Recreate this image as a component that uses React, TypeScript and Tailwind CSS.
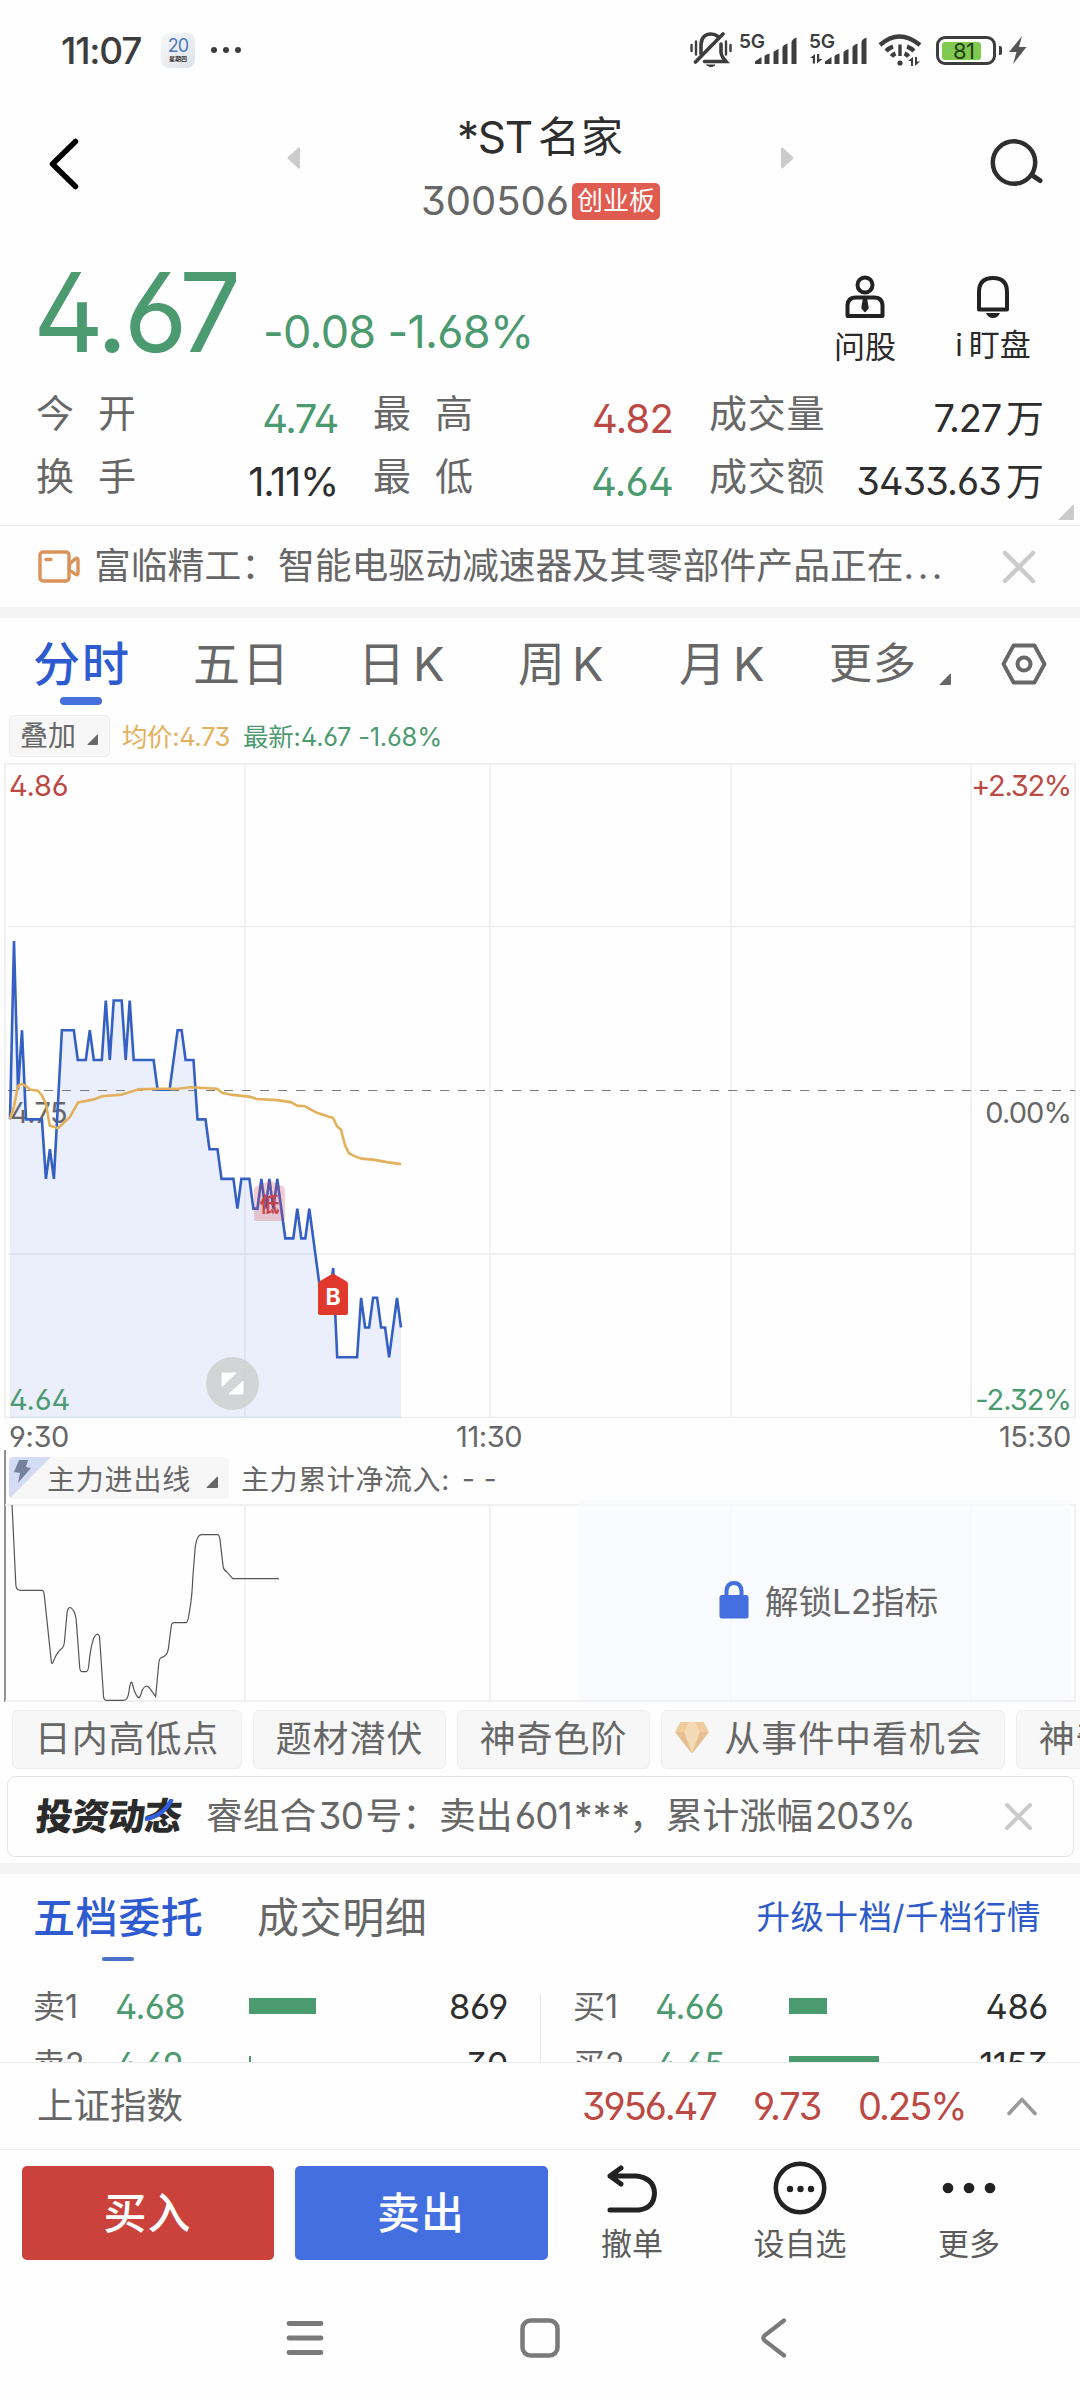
import React from 'react';

// [minute, ticks away from the previous close]
const priceTicks: [number, number][] = [
  [0, -1], [1, 5], [2, 0], [3, 2], [4, -1], [8, -1], [9, -3], [10, -2], [11, -3], [13, 2], [16, 2], [17, 1],
  [19, 1], [20, 2], [21, 1], [23, 1], [24, 3], [25, 1], [26, 3], [28, 3], [29, 1], [30, 3], [31, 1], [36, 1],
  [37, 0], [40, 0], [42, 2], [43, 2], [44, 1], [46, 1], [47, -1], [49, -1], [50, -2], [52, -2], [53, -3],
  [56, -3], [57, -4], [58, -3], [60, -3], [61, -4], [62, -4], [63, -3], [64, -4], [65, -3], [66, -4], [67, -3],
  [69, -5], [71, -5], [72, -4], [73, -5], [74, -5], [75, -4], [78, -7], [80, -7], [81, -6], [82, -9], [87, -9],
  [88, -7], [89, -8], [90, -8], [91, -7], [92, -7], [93, -8], [94, -8], [95, -9], [97, -7], [98, -8],
];

const avgLine =
  '10,356 14,343.6 18,323 22,320.9 26.5,323.6 30.5,326.7 38,327.8 42,332.6 46,340.9 49.7,362.5 58,365.3 70,353.9 78,339.5 94,336.4 102,333.3 122,331.6 138,326.4 158,325.7 178,325.7 191,324.3 217,325.7 222,329.8 230,331.6 249,333.6 257,336 277,337.1 291,339.1 297,342.6 305,343.3 317,349.8 333,355 337,363.2 341,366.7 345,382.2 349,390.4 354,392.9 361,395.6 373,396.6 387,399.1 401,401.1';

const flowLine =
  'M35 0 L46 240 Q47 256 60 256 L122 256 Q128 256 129 275 L149 470 Q151 482 156 467 Q165 442 180 430 Q187 425 188 400 L195 320 Q200 302 208 310 Q221 322 222 355 L231 480 Q231 500 238 500 L250 500 Q256 500 258 480 Q262 430 272 400 Q283 378 289 395 L300 565 Q300 586 308 586 L360 586 Q372 586 375 555 Q381 517 385 540 Q395 578 404 578 Q408 575 413 555 Q424 535 435 550 L452 575 L461 475 Q463 457 470 457 Q486 453 489 430 L497 365 Q498 353 505 353 L540 353 Q546 353 550 320 Q558 275 560 215 L567 125 Q572 89 585 89 L632 89 Q638 89 640 115 L648 185 Q650 197 658 200 L676 221 L810 221';

const gridX = [245, 490, 731, 971];

const stats = [
  { label: '今', label2: '开', value: '4.74', color: 'text-[#4c9a70] tracking-[-1.4px]' },
  { label: '最', label2: '高', value: '4.82', color: 'text-[#bb4a44] tracking-[-0.8px]' },
  { label: '换', label2: '手', value: '1.11%', color: 'text-[#2e2e2e] tracking-[-1.3px]' },
  { label: '最', label2: '低', value: '4.64', color: 'text-[#4c9a70] tracking-[-0.8px]' },
];

const orders = [
  [
    { name: '卖1', price: '4.68', bar: 67, qty: '869' },
    { name: '卖2', price: '4.69', bar: 2, qty: '30' },
  ],
  [
    { name: '买1', price: '4.66', bar: 38, qty: '486' },
    { name: '买2', price: '4.65', bar: 90, qty: '1153' },
  ],
];

function Corner({ size, className }: { size: number; className: string }) {
  return (
    <svg width={size} height={size} viewBox="0 0 12 12" fill="currentColor" className={className}>
      <path d="M12 1.5 V11 Q12 12 11 12 H1 Q0 12 .7 11.2 L10.8 1 Q12 0 12 1.5Z" />
    </svg>
  );
}

function Close({ size, width }: { size: number; width: number }) {
  return (
    <svg width={size} height={size} viewBox={`0 0 ${size} ${size}`} stroke="#cbcbcb" strokeWidth={width} strokeLinecap="round">
      <path d={`M3 3 L${size - 3} ${size - 3} M${size - 3} 3 L3 ${size - 3}`} />
    </svg>
  );
}

function Signal({ data }: { data?: boolean }) {
  return (
    <svg width="60" height="34" viewBox="0 0 60 34" fill="#3d3d3d" className="overflow-visible">
      <text x="-1" y="15" fontSize="19" fontWeight="600" letterSpacing="-0.2">5G</text>
      <path d="M15 31 V28.5 L21.5 24 V31Z M24.500 31 V23.500 Q24.500 22 29.500 20.500 V31Z M33.500 31 V19.500 Q33.500 18 38.500 16 V31Z M42.500 31 V14.500 Q42.500 12.500 47.500 10.500 V31Z M51.500 31 V9.500 Q51.500 6.500 56.500 4.500 V31Z" />
      {data && <path d="M0 25 L5 21 V30.500 H2.800 V25Z M7 21 H9.200 V26 H12.500 L7 30.500Z" />}
    </svg>
  );
}

function StatusBar() {
  return (
    <div className="h-[100px] flex items-center pl-[61px] text-[#3d3d3d]">
      <div className="w-[100px] text-[37px] leading-none font-medium tracking-[-1.2px]">11:07</div>
      <div className="w-[34px] h-[35px] mt-[1px] rounded-[8px] bg-linear-to-br from-[#f6f8fa] to-[#dde3e9] flex flex-col items-center">
        <span className="text-[18px] leading-none tracking-[-1px] text-[#4f79bd] mt-[4px]">20</span>
        <span className="text-[6px] leading-[8px] font-bold text-[#333]">星期四</span>
      </div>
      <div className="flex gap-[6px] ml-[16px]">
        <i className="size-[6px] rounded-full bg-[#3d3d3d]" />
        <i className="size-[6px] rounded-full bg-[#3d3d3d]" />
        <i className="size-[6px] rounded-full bg-[#3d3d3d]" />
      </div>
      <svg width="42" height="36" viewBox="0 0 42 36" className="ml-[449px]" fill="none" stroke="#3d3d3d" strokeWidth="3.600" strokeLinecap="round">
        <path d="M1.500 13 V19 M6 9.500 V22.500 M36 9.500 V22.500 M40.500 13 V19" strokeWidth="2.400" />
        <path d="M11 22 V12 Q12 2 21 2 Q25 2 28 4.500 M31 12 V20 Q31 24 36 29.500 H14.500 M5.500 30 L33 2" />
        <path d="M17 33 H25 Q21 36.500 17 33Z" fill="#3d3d3d" strokeWidth="1" />
      </svg>
      <div className="flex items-center ml-[8px] gap-[10px]">
        <Signal />
        <Signal data />
      </div>
      <svg width="44" height="34" viewBox="0 0 44 34" className="ml-[8px]" fill="none" stroke="#3d3d3d" strokeWidth="4.400">
        <path d="M2 12 Q21 -5 42 12" />
        <path d="M8 18 Q11 15 15 13.500 M29 13.500 Q33 15 36 18 M13.500 23.500 Q15 21.500 17.500 20.500 M26.500 20.500 Q29 21.500 30.500 23.500" />
        <path d="M22 11.500 V23" strokeWidth="3.400" />
        <circle cx="22" cy="30" r="2.600" fill="#3d3d3d" stroke="none" />
        <path d="M30 28 L35 24 V33 H33 V28Z M37 24 H39 V28.500 H42 L37 33Z" fill="#3d3d3d" stroke="none" />
      </svg>
      <div className="ml-[14px] w-[60px] h-[29px] rounded-[9px] border-[3px] border-[#3d3d3d] p-[3px]">
        <div className="w-[39px] h-[18px] rounded-[3px] bg-[#80c950] text-[22px] leading-[19px] pl-[11px] tracking-[-0.500px] text-[#24401a]">81</div>
      </div>
      <div className="w-[3px] h-[9px] ml-[3px] rounded-r-[2px] bg-[#3d3d3d]" />
      <svg width="18" height="28" viewBox="0 0 18 28" fill="#555" className="ml-[7px]">
        <path d="M13 0 L0 16 H7.500 L4 28 L17.500 11 H10Z" />
      </svg>
    </div>
  );
}

function Header() {
  return (
    <div className="h-[130px] flex text-[#2e2e2e]">
      <svg width="32" height="54" viewBox="0 0 32 54" className="ml-[48px] mt-[37px]" fill="none" stroke="#000" strokeWidth="5.500" strokeLinecap="round" strokeLinejoin="round">
        <path d="M27.500 4.500 L4.500 27 L27.500 49.500" />
      </svg>
      <svg width="14" height="22" viewBox="0 0 14 22" fill="#cbcbcb" className="ml-[207px] mt-[47px]">
        <path d="M1 10 Q0 11 1 12 L11.500 21.500 Q13 22 13 20.500 V1.500 Q13 0 11.500 .5Z" />
      </svg>
      <div className="w-[479px] flex flex-col items-center">
        <div className="mt-[14px] h-[46px] text-[44px] leading-[46px] flex items-center gap-[6px]">
          <span className="tracking-[-1.300px]">*ST</span>
          <span className="text-[42px] tracking-[1px]">名家</span>
        </div>
        <div className="mt-[18px] h-[46px] flex items-center gap-[3px] text-[40px] leading-none text-[#676767]">
          <span>300506</span>
          <span className="h-[37px] w-[88px] rounded-[5px] bg-[#e15c50] text-white text-[26px] leading-[35px] text-center">创业板</span>
        </div>
      </div>
      <svg width="14" height="22" viewBox="0 0 14 22" fill="#cbcbcb" className="mt-[47px]">
        <path d="M13 10 Q14 11 13 12 L2.500 21.500 Q1 22 1 20.500 V1.500 Q1 0 2.500 .5Z" />
      </svg>
      <svg width="56" height="52" viewBox="0 0 56 52" className="ml-[194px] mt-[37px]" fill="none" stroke="#2e2e2e" strokeWidth="4.500" strokeLinecap="round">
        <circle cx="26" cy="25.500" r="21.200" />
        <path d="M44.500 38.500 L52 43.500" strokeWidth="5" />
      </svg>
    </div>
  );
}

function Quote() {
  return (
    <div className="h-[152px] flex text-[#4c9a70]">
      <div className="w-[226px] pl-[33px] mt-[27px] text-[110px] leading-[110px] tracking-[-4.200px]">4.67</div>
      <div className="w-[568px] pl-[37px] mt-[79px] text-[45px] leading-[46px] tracking-[-0.700px] whitespace-pre">-0.08 -1.68%</div>
      <div className="flex text-[#2a2a2a] text-[31px] leading-[34px] pt-[44px]">
        <div className="w-[142px] flex flex-col items-center">
          <svg width="42" height="46" viewBox="0 0 42 46" fill="none" stroke="#222" strokeWidth="4" strokeLinejoin="round">
            <circle cx="21" cy="11" r="7.500" />
            <path d="M3.500 42 V31 Q4 23.500 12 23.500 H30 Q38 23.500 38.500 31 V42Z" />
            <path d="M19.500 25 H22.500 L24 34 L21 37.500 L18 34Z" fill="#222" strokeWidth="1.500" />
          </svg>
          <div className="mt-[10px]">问股</div>
        </div>
        <div className="w-[114px] flex flex-col items-center">
          <svg width="36" height="46" viewBox="0 0 36 46" fill="none" stroke="#222" strokeWidth="4" strokeLinejoin="round">
            <path d="M4 35.500 V18 Q4 4 18 4 Q32 4 32 18 V35.500Z" />
            <path d="M11 39 H25 Q23 44 18 44 Q13 44 11 39Z" fill="#222" stroke="none" />
          </svg>
          <div className="mt-[8px] whitespace-nowrap"><span className="mr-[6px]">i</span>盯盘</div>
        </div>
      </div>
    </div>
  );
}

function Stats() {
  return (
    <div className="h-[144px] border-b border-[#ededed] relative flex text-[38px] leading-[63px] text-[#676767]">
      <div className="grid grid-cols-[338px_335px] auto-rows-[63px]">
        {stats.map((s, i) => (
          <div key={i} className="flex">
            <span className={i % 2 ? 'pl-[35px] w-[97px]' : 'pl-[36px] w-[98px]'}>{s.label}</span>
            <span>{s.label2}</span>
            <span className={`ml-auto mt-[5px] text-[40px] ${s.color}`}>{s.value}</span>
          </div>
        ))}
      </div>
      <div className="w-[371px] grid auto-rows-[63px] pl-[36px]">
        <div className="flex justify-between">
          <span className="tracking-[0.7px]">成交量</span>
          <span className="mt-[5px] text-[#2e2e2e]"><span className="tracking-[-1.2px] mr-[5px]">7.27</span>万</span>
        </div>
        <div className="flex justify-between">
          <span className="tracking-[0.7px]">成交额</span>
          <span className="mt-[5px] text-[#2e2e2e]"><span className="tracking-[-0.9px] mr-[5px]">3433.63</span>万</span>
        </div>
      </div>
      <Corner size={16} className="absolute right-[6px] bottom-[5px] text-[#cbcbcb]" />
    </div>
  );
}

function NewsStrip() {
  return (
    <div className="h-[81px] flex items-center pl-[37px]">
      <svg width="44" height="36" viewBox="0 0 44 36" fill="none" stroke="#d9925a" strokeWidth="3.400" strokeLinejoin="round">
        <rect x="3" y="3" width="29" height="29" rx="3" />
        <path d="M32.500 15 L38 10 Q41 8 41 11 V24 Q41 27 38 25 L32.500 21Z M9 10.500 H14" strokeLinecap="round" />
      </svg>
      <div className="ml-[13px] w-[908px] text-[36.8px] leading-none text-[#676767] whitespace-nowrap">
        富临精工：智能电驱动减速器及其零部件产品正在<span className="tracking-[3.500px]">...</span>
      </div>
      <Close size={34} width={4.5} />
    </div>
  );
}

function PeriodTabs() {
  return (
    <div className="h-[90px] flex items-center text-[47px] leading-none text-[#676767] whitespace-nowrap">
      <div className="relative w-[161px] pl-[33px] tracking-[2px] font-medium text-[#2f5bd0]">
        分时
        <span className="absolute left-[60px] -bottom-[18px] w-[42px] h-[8px] rounded-full bg-[#446fdc]" />
      </div>
      <div className="w-[165px] pl-[32px] tracking-[2px]">五日</div>
      <div className="w-[160px] pl-[32px]">日<span className="ml-[8px]">K</span></div>
      <div className="w-[161px] pl-[32px]">周<span className="ml-[7px]">K</span></div>
      <div className="w-[160px] pl-[32px]">月<span className="ml-[7px]">K</span></div>
      <div className="w-[194px] pl-[22px] flex items-end text-[43px] tracking-[1px]">
        更多
        <Corner size={12} className="ml-[22px]" />
      </div>
      <svg width="46" height="42" viewBox="0 0 46 42" fill="none" stroke="#676767" strokeWidth="3.800" strokeLinejoin="round" className="mt-[2px]">
        <path d="M12.500 2.500 H33.500 L43.500 21 L33.500 39.500 H12.500 L2.500 21Z" />
        <circle cx="23" cy="21" r="6.500" strokeWidth="4" />
      </svg>
    </div>
  );
}

function PriceChart() {
  const pts = priceTicks.map(([m, t]) => `${(10 + m * 3.99).toFixed(1)},${(326.7 - t * 29.73).toFixed(1)}`).join(' ');
  return (
    <div className="relative h-[655px] text-[29px] leading-[30px] text-[#676767] tracking-[-0.6px]">
      <svg width="1080" height="655" viewBox="0 0 1080 655" fill="none">
        <path d="M5 0.700 H1075 V654.500 H5Z M8 163.500 H1075 M8 491 H1075" stroke="#ececec" strokeWidth="1.500" />
        {gridX.map(x => <path key={x} d={`M${x} 0 V655`} stroke="#ececec" strokeWidth="1.500" />)}
        <polygon points={`10,655 ${pts} 401,655`} fill="#446fe0" fillOpacity="0.1" />
        <path d="M8 327.500 H1075" stroke="#7c7c7c" strokeWidth="1" strokeDasharray="9 9" />
      </svg>
      <span className="absolute left-[10px] top-[335px]">4.75</span>
      <svg width="1080" height="655" viewBox="0 0 1080 655" fill="none" className="absolute inset-0">
        <polyline points={pts} stroke="#3460c4" strokeWidth="2.600" />
        <polyline points={avgLine} stroke="#e3b05c" strokeWidth="2.600" strokeLinejoin="round" />
        <path d="M254 427 Q254 424 257 423 L269.500 417.500 L282 423 Q285 424 285 427 V456 Q285 458 283 458 H256 Q254 458 254 456Z" fill="#d04050" fillOpacity="0.250" />
        <text x="269.500" y="448.500" textAnchor="middle" fontSize="20" fontWeight="700" letterSpacing="0" fill="#c94246">低</text>
        <path d="M318 521 Q318 519 320 518 L333 510.500 L346 518 Q348 519 348 521 V550 Q348 552 346 552 H320 Q318 552 318 550Z" fill="#e1382d" />
        <text x="333" y="542" textAnchor="middle" fontSize="23" fontWeight="700" letterSpacing="0" fill="#fff">B</text>
        <circle cx="232.500" cy="620.500" r="26.500" fill="#cfcfcf" fillOpacity="0.850" />
        <path d="M222 610 H236 L222 623.500Z M243 618 V631 H229Z" fill="#fff" stroke="#fff" strokeLinejoin="round" />
      </svg>
      <span className="absolute left-[9px] top-[8px] tracking-[-0.200px] text-[#bb4a44]">4.86</span>
      <span className="absolute right-[9px] top-[8px] text-[#bb4a44] tracking-[-1.300px]">+2.32%</span>
      <span className="absolute right-[9px] top-[335px] tracking-[-0.900px]">0.00%</span>
      <span className="absolute left-[9px] top-[622px] tracking-[-0.200px] text-[#4c9a70]">4.64</span>
      <span className="absolute right-[9px] top-[622px] text-[#4c9a70] tracking-[-1px]">-2.32%</span>
    </div>
  );
}

function FlowChart() {
  return (
    <div className="relative">
      <div className="absolute left-[4px] -top-[5px] w-[2px] h-[252px] bg-[#929292]" />
      <div className="h-[49px] flex items-center pl-[9px] text-[28px] leading-none text-[#676767]">
        <div className="relative -mt-[3px] w-[220px] h-[42px] rounded-[5px] bg-[#f7f7f7] flex items-center pl-[38px] pt-[3px] overflow-hidden tracking-[0.8px]">
          <svg width="42" height="42" viewBox="0 0 42 42" className="absolute left-0 top-0">
            <path d="M0 0 H42 L0 42Z" fill="#d3dcf4" />
            <path d="M10 3 L19 3 L17 10 L22 11 L9 26 L11 16 L5 15Z" fill="#76819f" />
          </svg>
          主力进出线
          <Corner size={12} className="ml-[15px] mt-[5px]" />
        </div>
        <span className="ml-[12px] tracking-[0.6px]">主力累计净流入:</span>
        <span className="ml-[12px] -mt-px tracking-[0.600px]">- -</span>
      </div>
      <div className="relative h-[198px]">
        <svg width="1080" height="198" viewBox="0 0 1080 198" fill="none">
          <path d="M5 1 H1075 V197 H5" stroke="#ececec" strokeWidth="1.500" />
          {gridX.map(x => <path key={x} d={`M${x} 1 V197`} stroke="#ececec" strokeWidth="1.500" />)}
          <g transform="translate(0 1) scale(0.3444 0.3333)">
            <path d={flowLine} stroke="#555" strokeWidth="1.200" vectorEffect="non-scaling-stroke" />
          </g>
        </svg>
        <div className="absolute left-[579px] -top-[4px] w-[492px] h-[200px] bg-[#f7faff]/80 flex items-center pl-[140px] text-[33.500px] leading-none text-[#676767]">
          <svg width="30" height="38" viewBox="0 0 30 38" fill="none" stroke="#446fe0" strokeWidth="4">
            <path d="M7.500 16 V10 Q8 2 15 2 Q22 2 22.500 10 V16" />
            <rect x="0.500" y="14" width="29" height="23.500" rx="2.500" fill="#446fe0" stroke="none" />
          </svg>
          <span className="ml-[16px] mt-[5px]">解锁L2指标</span>
        </div>
      </div>
    </div>
  );
}

function Pills() {
  const pill = 'h-[59px] shrink-0 rounded-[6px] border border-[#eeeeee] bg-[#f7f7f7] flex items-center justify-center';
  return (
    <div className="h-[74px] flex items-center gap-[11px] pl-[12px] overflow-hidden text-[36px] tracking-[0.9px] leading-none text-[#676767] whitespace-nowrap">
      <div className={`${pill} w-[230px]`}>日内高低点</div>
      <div className={`${pill} w-[193px]`}>题材潜伏</div>
      <div className={`${pill} w-[193px]`}>神奇色阶</div>
      <div className={`${pill} w-[344px] gap-[15px] pr-[8px]`}>
        <svg width="34" height="31" viewBox="0 0 34 31" className="-mt-[3px]">
          <path d="M5.500 0 H28.500 L34 10 H0Z" fill="#efcb9e" />
          <path d="M0 10 H34 L18.500 30 Q17 31.500 15.500 30Z" fill="#e6be92" />
          <path d="M9 10 L14 0 H20 L25 10 L17 31Z" fill="#f4d9b5" />
        </svg>
        从事件中看机会
      </div>
      <div className={`${pill} w-[193px]`}>神奇电波</div>
    </div>
  );
}

function Feed() {
  return (
    <div className="mx-[7px] mr-[6px] h-[81px] mb-[6px] border border-[#e4e4e4] rounded-[8px] flex items-center text-[#676767]">
      <div className="relative w-[174px] pl-[28px] text-[37px] leading-none font-black tracking-[-0.8px] text-[#2b2b2b] -skew-x-6 whitespace-nowrap">
        投资动态
        <svg width="27" height="23" viewBox="0 0 27 23" className="absolute left-[137px] top-[1px]" fill="none" stroke="#2f5fe0" strokeWidth="4.500">
          <path d="M25 0 Q19 17 0 20" />
        </svg>
      </div>
      <div className="ml-[24px] w-[798px] text-[36.800px] leading-none whitespace-nowrap">
        睿组合<span className="mx-[2px] tracking-[-0.500px]">30</span>号：卖出<span className="mx-[2px] tracking-[-0.700px]">601</span><span className="tracking-[0.200px]">***</span><span className="-ml-[1px]">，</span>累计涨幅<span className="ml-[2px] tracking-[-1.200px]">203%</span>
      </div>
      <Close size={29} width={4} />
    </div>
  );
}

function OrderBook() {
  return (
    <>
      <div className="h-[86px] flex items-center pl-[33px] pr-[39px] pt-[2px] text-[42px] leading-none text-[#676767]">
        <div className="relative w-[224px] tracking-[0.6px] font-medium text-[#2f5bd0]">
          五档委托
          <span className="absolute left-[69px] -bottom-[22px] w-[32px] h-[4px] rounded-full bg-[#4a72c8]" />
        </div>
        <div className="tracking-[0.6px]">成交明细</div>
        <div className="ml-auto text-[33.500px] tracking-[0.5px] text-[#2f5bc8]">升级十档/千档行情</div>
      </div>
      <div className="h-[102px] pt-[17px] overflow-hidden grid grid-cols-2 relative text-[34.500px] leading-[56px]">
        {orders.map((side, i) => (
          <div key={i}>
            {side.map(o => (
              <div key={o.name} className="h-[58px] flex items-center pl-[33px] pr-[32px]">
                <span className="w-[82px] pt-[2px] text-[32px] text-[#676767]">{o.name}</span>
                <span className="w-[134px] pt-[2px] tracking-[-0.6px] text-[#4c9a70]">{o.price}</span>
                <span className="h-[16px] bg-[#4c9a70]" style={{ width: o.bar }} />
                <span className="ml-auto pt-[2px] tracking-[-0.4px] text-[#2e2e2e]">{o.qty}</span>
              </div>
            ))}
          </div>
        ))}
        <div className="absolute left-[540px] top-[35px] bottom-0 w-px bg-[#e4e4e4]" />
      </div>
    </>
  );
}

function IndexBar() {
  return (
    <div className="h-[88px] border-y border-[#ececec] flex items-center text-[38px] leading-none text-[#bb4a44]">
      <div className="w-[582px] pl-[37px] text-[36.500px] text-[#676767]">上证指数</div>
      <div className="w-[171px] tracking-[-2px]">3956.47</div>
      <div className="w-[105px] tracking-[-1.300px]">9.73</div>
      <div className="w-[148px] tracking-[-2px]">0.25%</div>
      <svg width="32" height="20" viewBox="0 0 32 20" fill="none" stroke="#9a9a9a" strokeWidth="3.600" strokeLinecap="round" strokeLinejoin="round">
        <path d="M3 17.500 L16 3.500 L29 17.500" />
      </svg>
    </div>
  );
}

function ActionBar() {
  return (
    <div className="h-[126px] pt-[16px] flex text-[31px] leading-[34px] text-[#5c5c5c]">
      <button className="ml-[22px] w-[252px] h-[94px] pr-[1px] rounded-[5px] bg-[#cb413b] text-white text-[43px] leading-none tracking-[1px] font-medium">买入</button>
      <button className="ml-[21px] w-[253px] h-[94px] pr-[1px] rounded-[5px] bg-[#446fe0] text-white text-[43px] leading-none tracking-[1px] font-medium">卖出</button>
      <div className="ml-[32px] w-[104px] flex flex-col items-center">
        <svg width="54" height="50" viewBox="0 0 54 50" fill="none" stroke="#222" strokeWidth="5" strokeLinecap="round" strokeLinejoin="round" className="-mt-[1px]">
          <path d="M16 3 L5 11 L16 19 M5 11 H31 Q49 13 49.500 28 Q49 43 34 45 H5" />
        </svg>
        <div className="mt-[12px]">撤单</div>
      </div>
      <div className="ml-[44px] w-[144px] flex flex-col items-center">
        <svg width="54" height="54" viewBox="0 0 54 54" fill="#222" className="-mt-[5px]">
          <circle cx="27" cy="27" r="24.200" fill="none" stroke="#222" strokeWidth="4.500" />
          <circle cx="17" cy="28" r="3.200" />
          <circle cx="27.500" cy="28" r="3.200" />
          <circle cx="38" cy="28" r="3.200" />
        </svg>
        <div className="mt-[12px]">设自选</div>
      </div>
      <div className="ml-[45px] w-[104px] flex flex-col items-center">
        <svg width="54" height="50" viewBox="0 0 54 50" fill="#222">
          <circle cx="6" cy="22" r="5.300" />
          <circle cx="27" cy="22" r="5.300" />
          <circle cx="48" cy="22" r="5.300" />
        </svg>
        <div className="mt-[11px]">更多</div>
      </div>
    </div>
  );
}

function NavBar() {
  return (
    <div className="h-[124px] flex items-center pl-[286px]">
      <svg width="38" height="38" viewBox="0 0 38 38" stroke="#7a7a7a" strokeWidth="4.800" strokeLinecap="round">
        <path d="M3 4.500 H35 M3 19 H35 M3 33.500 H35" />
      </svg>
      <svg width="40" height="40" viewBox="0 0 40 40" className="ml-[196px]" fill="none" stroke="#7a7a7a" strokeWidth="4.500">
        <rect x="2.500" y="2.500" width="35" height="35" rx="8" />
      </svg>
      <svg width="28" height="40" viewBox="0 0 28 40" className="ml-[200px]" fill="none" stroke="#7a7a7a" strokeWidth="4.200" strokeLinecap="round">
        <path d="M24 2.500 L4.500 17.500 Q2 20 4.500 22.500 L24 37.500" />
      </svg>
    </div>
  );
}

export default function App() {
  return (
    <div className="w-[1080px] h-[2400px] overflow-hidden bg-[#fefefe] flex flex-col *:shrink-0 font-['Inter','Noto_Sans_CJK_SC',sans-serif] [font-feature-settings:'ss01','cv09']">
      <StatusBar />
      <Header />
      <Quote />
      <Stats />
      <NewsStrip />
      <div className="h-[11px] bg-[#f4f4f4]" />
      <PeriodTabs />

      {/* Overlay legend */}
      <div className="h-[55px] flex items-center pl-[9px] text-[25.500px] leading-none">
        <div className="w-[101px] h-[42px] rounded-[5px] border border-[#eeeeee] bg-[#f7f7f7] flex items-center pl-[10px] text-[28px] text-[#676767]">
          叠加
          <Corner size={11} className="ml-[11px] mt-[8px]" />
        </div>
        <div className="ml-[12px] mt-[2px] w-[121px] tracking-[-0.400px] text-[#e3b05c]">均价:4.73</div>
        <div className="mt-[2px] tracking-[-0.200px] text-[#4c9a70]">最新:4.67 -1.68%</div>
      </div>

      <PriceChart />
      <div className="h-[37px] px-[9px] grid grid-cols-3 text-[29px] leading-[37px] tracking-[-0.4px] text-[#676767]">
        <span>9:30</span>
        <span className="pl-[93px]">11:30</span>
        <span className="text-right">15:30</span>
      </div>
      <FlowChart />
      <Pills />
      <Feed />
      <div className="h-[11px] bg-[#f4f4f4]" />
      <OrderBook />
      <IndexBar />
      <ActionBar />
      <NavBar />
    </div>
  );
}
